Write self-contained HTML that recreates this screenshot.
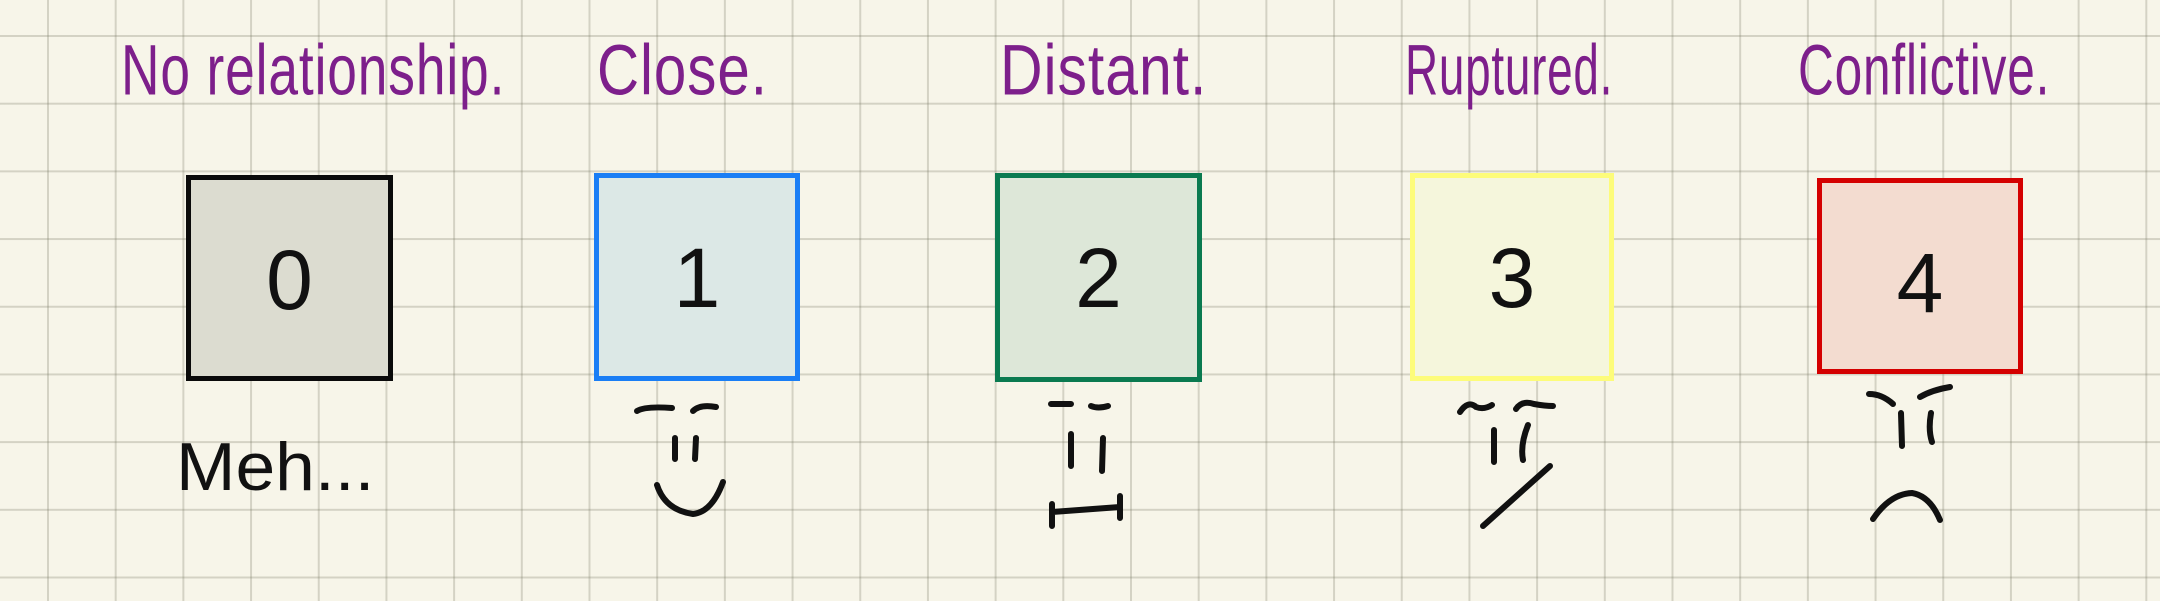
<!DOCTYPE html>
<html><head><meta charset="utf-8"><style>
html,body{margin:0;padding:0}
body{width:2160px;height:601px;overflow:hidden;position:relative;background-color:#f7f5e9;
background-image:linear-gradient(to right,rgba(120,120,100,.28) 2px,transparent 2px),linear-gradient(to bottom,rgba(120,120,100,.28) 2px,transparent 2px);
background-size:67.7px 67.7px;background-position:47px 35px}
.t{position:absolute;color:#7d1f8b;font-family:"Liberation Sans",sans-serif;font-size:62px;white-space:nowrap;letter-spacing:1px;transform-origin:left top}
.b{position:absolute;box-sizing:border-box;border-width:5px;border-style:solid}
.n{position:absolute;font-family:"Liberation Sans",sans-serif;font-size:84px;color:#111;width:100%;text-align:center;top:52px;left:0}
</style></head><body>
<div class="t" style="left:121px;top:30px;transform:scale(0.86,1.15)">No relationship.</div>
<div class="t" style="left:597px;top:30px;transform:scale(0.94,1.15)">Close.</div>
<div class="t" style="left:1000px;top:30px;transform:scale(0.95,1.15)">Distant.</div>
<div class="t" style="left:1405px;top:30px;transform:scale(0.74,1.15)">Ruptured.</div>
<div class="t" style="left:1798px;top:30px;transform:scale(0.8,1.15)">Conflictive.</div>

<div class="b" style="left:186px;top:175px;width:207px;height:206px;border-color:#0a0a0a;background:#dcdcd0"><div class="n">0</div></div>
<div class="b" style="left:594px;top:173px;width:206px;height:208px;border-color:#1a7ef5;background:#dce8e6"><div class="n">1</div></div>
<div class="b" style="left:995px;top:173px;width:207px;height:209px;border-color:#0a7a50;background:#dde7d8"><div class="n">2</div></div>
<div class="b" style="left:1410px;top:173px;width:204px;height:208px;border-color:#fdfc7a;background:#f5f6dc"><div class="n">3</div></div>
<div class="b" style="left:1817px;top:178px;width:206px;height:196px;border-color:#d40000;background:#f3dcd0"><div class="n">4</div></div>

<div style="position:absolute;left:176px;top:428px;font-family:'Liberation Sans',sans-serif;font-size:68px;color:#111;transform:scaleX(1.05);transform-origin:left top">Meh...</div>

<svg width="2160" height="601" style="position:absolute;left:0;top:0" fill="none" stroke="#111" stroke-width="6" stroke-linecap="round">
<path d="M637,411 Q645,406 672,408 M693,411 Q700,404 716,407 M675,438 L675,459 M696,438 L695,459 M657,485 Q665,510 693,514 Q712,512 723,482"/>
<path d="M1051,404 L1071,404 M1091,406 Q1098,409 1108,406 M1071,434 L1071,466 M1103,438 L1102,471 M1052,504 L1052,526 M1052,512 L1120,507 M1120,496 L1120,518"/>
<path d="M1460,412 Q1468,400 1476,407 Q1484,410 1492,405 M1516,409 Q1522,400 1534,404 Q1545,406 1553,406 M1494,430 L1494,462 M1528,425 Q1520,445 1523,460 M1483,526 L1550,466"/>
<path d="M1869,394 Q1882,394 1893,404 M1920,397 Q1932,390 1950,387 M1901,413 L1902,446 M1931,413 Q1928,430 1932,442 M1873,519 Q1890,494 1912,493 Q1930,496 1940,520"/>
</svg>
</body></html>
